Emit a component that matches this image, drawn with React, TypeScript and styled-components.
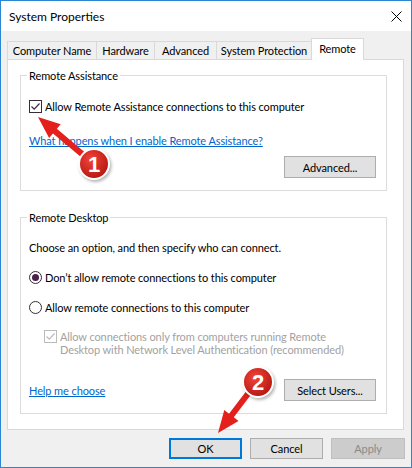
import React from "react";
import styled, { createGlobalStyle } from "styled-components";

const FONT = `Lato, "Liberation Sans", sans-serif`;

const GlobalStyle = createGlobalStyle`
  html, body { margin: 0; padding: 0; background: #ffffff; }
  body { font-family: ${FONT}; font-size: 11px; color: #000; }
  * { box-sizing: border-box; }
`;

const Window = styled.div`
  position: relative;
  width: 412px;
  height: 468px;
  border: 1px solid #2b87d5;
  background: #f0f0f0;
  display: flex;
  flex-direction: column;
  font-family: ${FONT};
  font-size: 11px;
  letter-spacing: -0.1px;
  color: #000;
  overflow: hidden;
`;

const TitleBar = styled.div`
  height: 30px;
  background: #ffffff;
  display: flex;
  align-items: center;
  justify-content: space-between;
  padding-left: 8px;
  flex: none;
`;

const Title = styled.span`
  font-size: 12px;
  letter-spacing: 0;
  line-height: 15px;
`;

const CloseButton = styled.div`
  width: 30px;
  height: 30px;
  display: flex;
  align-items: center;
  justify-content: center;
`;

const Body = styled.div`
  flex: 1;
  display: flex;
  flex-direction: column;
  padding: 0 6px;
`;

const TabStrip = styled.div`
  display: flex;
  align-items: flex-end;
  height: 28px;
  padding-top: 7px;
  position: relative;
  z-index: 1;
`;

const Tab = styled.div<{ $w: number; $active?: boolean }>`
  width: ${(p) => p.$w}px;
  height: ${(p) => (p.$active ? 22 : 18)}px;
  margin-left: -1px;
  margin-bottom: ${(p) => (p.$active ? -1 : 0)}px;
  border: 1px solid #d9d9d9;
  border-bottom: none;
  background: ${(p) => (p.$active ? "#ffffff" : "#f0f0f0")};
  display: flex;
  align-items: ${(p) => (p.$active ? "flex-start" : "center")};
  justify-content: center;
  padding-top: ${(p) => (p.$active ? 2 : 0)}px;
  line-height: 15px;
  white-space: nowrap;
  &:first-child { margin-left: 0; }
`;

const Panel = styled.div`
  height: 371px;
  margin-right: 1px;
  background: #ffffff;
  border: 1px solid #d9d9d9;
  padding: 8px 0 0 12px;
  display: flex;
  flex-direction: column;
`;

const Group = styled.fieldset<{ $mt: number }>`
  width: 367px;
  margin: ${(p) => p.$mt}px 0 0 0;
  border: 1px solid #dcdcdc;
  padding: 0 10px 12px 8px;
  display: flex;
  flex-direction: column;
  min-width: 0;
`;

const Legend = styled.legend`
  padding: 0 2px;
  margin-left: -2px;
  line-height: 15px;
`;

const Row = styled.div<{ $mt: number }>`
  display: flex;
  align-items: center;
  margin-top: ${(p) => p.$mt}px;
  line-height: 15px;
  white-space: nowrap;
`;

const Text = styled.span`
  color: #000;
`;

const Link = styled.a`
  color: #0066cc;
  text-decoration: underline;
  cursor: pointer;
`;

const Box = styled.span<{ $disabled?: boolean }>`
  width: 13px;
  height: 13px;
  flex: none;
  border: 1px solid ${(p) => (p.$disabled ? "#bcbcbc" : "#3a2a3a")};
  background: #fff;
  display: flex;
  align-items: center;
  justify-content: center;
  margin-right: 3px;
`;

const Radio = styled.span<{ $checked?: boolean }>`
  width: 13px;
  height: 13px;
  flex: none;
  border: 1px solid #3a2a3a;
  border-radius: 50%;
  background: #fff;
  display: flex;
  align-items: center;
  justify-content: center;
  margin-right: 3px;
  &::after {
    content: "";
    display: ${(p) => (p.$checked ? "block" : "none")};
    width: 7px;
    height: 7px;
    border-radius: 50%;
    background: #4a1f48;
  }
`;

const DisabledBlock = styled.div`
  display: flex;
  align-items: flex-start;
  margin-top: 15px;
  padding-left: 15px;
  line-height: 13px;
  white-space: nowrap;
`;

const DisabledText = styled.div`
  color: #a2a2a2;
`;

const ButtonRow = styled.div<{ $mt: number; $between?: boolean }>`
  display: flex;
  align-items: center;
  justify-content: ${(p) => (p.$between ? "space-between" : "flex-end")};
  margin-top: ${(p) => p.$mt}px;
`;

const Button = styled.button<{ $w?: number; $primary?: boolean; $disabled?: boolean }>`
  width: ${(p) => p.$w ?? 92}px;
  height: ${(p) => (p.$w ? 21 : 22)}px;
  font-family: ${FONT};
  font-size: 11px;
  letter-spacing: -0.1px;
  line-height: 15px;
  padding: 0;
  color: ${(p) => (p.$disabled ? "#8a8a8a" : "#000")};
  background: ${(p) => (p.$disabled ? "#cccccc" : "#e1e1e1")};
  border: ${(p) =>
    p.$primary ? "2px solid #0078d7" : p.$disabled ? "1px solid #bfbfbf" : "1px solid #adadad"};
  border-radius: 0;
`;

const Footer = styled.div`
  display: flex;
  justify-content: flex-end;
  gap: 8px;
  margin-top: 8px;
`;

const Overlay = styled.svg`
  position: absolute;
  left: -1px;
  top: -1px;
  pointer-events: none;
`;

const Check = ({ color }: { color: string }) => (
  <svg width="11" height="11" viewBox="0 0 11 11">
    <path d="M1.5 5.5 L4.2 8.2 L9.5 2.5" fill="none" stroke={color} strokeWidth="1.2" />
  </svg>
);

const Badge = ({ cx, cy, label, id }: { cx: number; cy: number; label: string; id: string }) => (
  <g>
    <circle cx={cx + 1.5} cy={cy + 2} r={16} fill="rgba(0,0,0,0.28)" filter="url(#blur)" />
    <circle cx={cx} cy={cy} r={15} fill={`url(#${id})`} stroke="#ffffff" strokeWidth={2} />
    <text
      x={cx}
      y={cy + 7.5}
      textAnchor="middle"
      fontFamily={`"Liberation Sans", Arial, sans-serif`}
      fontWeight="bold"
      fontSize="22"
      fill="#ffffff"
    >
      {label}
    </text>
  </g>
);

export default function App() {
  return (
    <>
      <GlobalStyle />
      <Window>
        <TitleBar>
          <Title>System Properties</Title>
          <CloseButton>
            <svg width="11" height="11" viewBox="0 0 11 11">
              <path d="M0.5 0.5 L10.5 10.5 M10.5 0.5 L0.5 10.5" stroke="#000" strokeWidth="1" />
            </svg>
          </CloseButton>
        </TitleBar>
        <Body>
          <TabStrip>
            <Tab $w={90}>Computer Name</Tab>
            <Tab $w={59}>Hardware</Tab>
            <Tab $w={63}>Advanced</Tab>
            <Tab $w={96}>System Protection</Tab>
            <Tab $w={53} $active>
              Remote
            </Tab>
          </TabStrip>
          <Panel>
            <Group $mt={0}>
              <Legend>Remote Assistance</Legend>
              <Row $mt={16}>
                <Box>
                  <Check color="#3a2a3a" />
                </Box>
                <Text>Allow Remote Assistance connections to this computer</Text>
              </Row>
              <Row $mt={19}>
                <Link>What happens when I enable Remote Assistance?</Link>
              </Row>
              <ButtonRow $mt={8}>
                <Button>Advanced...</Button>
              </ButtonRow>
            </Group>
            <Group $mt={19}>
              <Legend>Remote Desktop</Legend>
              <Row $mt={15}>
                <Text>Choose an option, and then specify who can connect.</Text>
              </Row>
              <Row $mt={15}>
                <Radio $checked />
                <Text>Don’t allow remote connections to this computer</Text>
              </Row>
              <Row $mt={15}>
                <Radio />
                <Text>Allow remote connections to this computer</Text>
              </Row>
              <DisabledBlock>
                <Box $disabled>
                  <Check color="#bcbcbc" />
                </Box>
                <DisabledText>
                  Allow connections only from computers running Remote
                  <br />
                  Desktop with Network Level Authentication (recommended)
                </DisabledText>
              </DisabledBlock>
              <ButtonRow $mt={23} $between>
                <Link>Help me choose</Link>
                <Button>Select Users...</Button>
              </ButtonRow>
            </Group>
          </Panel>
          <Footer>
            <Button $w={73} $primary>
              OK
            </Button>
            <Button $w={73}>Cancel</Button>
            <Button $w={74} $disabled>
              Apply
            </Button>
          </Footer>
        </Body>
        <Overlay width="412" height="468" viewBox="0 0 412 468">
          <defs>
            <radialGradient id="g1" cx="40%" cy="35%" r="70%">
              <stop offset="0%" stopColor="#f0443a" />
              <stop offset="100%" stopColor="#b3140f" />
            </radialGradient>
            <radialGradient id="g2" cx="40%" cy="35%" r="70%">
              <stop offset="0%" stopColor="#f0443a" />
              <stop offset="100%" stopColor="#b3140f" />
            </radialGradient>
            <filter id="blur" x="-50%" y="-50%" width="200%" height="200%">
              <feGaussianBlur stdDeviation="1.5" />
            </filter>
          </defs>
          <polygon
            points="38,117 60.7,124.2 56.8,128.8 87.4,154.6 83.6,159.2 53,133.4 49.1,138"
            fill="#e3201b"
          />
          <polygon
            points="218,433 238.5,421 233.8,417.3 253.8,391.1 249,387.5 229,413.7 224.3,410"
            fill="#e3201b"
          />
          <Badge cx={94} cy={164} label="1" id="g1" />
          <Badge cx={258} cy={382} label="2" id="g2" />
        </Overlay>
      </Window>
    </>
  );
}
